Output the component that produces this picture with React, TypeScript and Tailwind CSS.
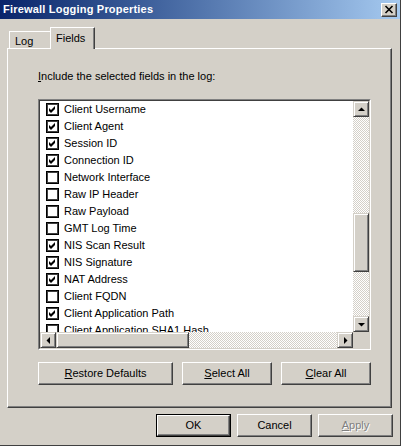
import type { ReactNode } from "react"

const fields: [string, boolean][] = [
  ["Client Username", true],
  ["Client Agent", true],
  ["Session ID", true],
  ["Connection ID", true],
  ["Network Interface", false],
  ["Raw IP Header", false],
  ["Raw Payload", false],
  ["GMT Log Time", false],
  ["NIS Scan Result", true],
  ["NIS Signature", true],
  ["NAT Address", true],
  ["Client FQDN", false],
  ["Client Application Path", true],
  ["Client Application SHA1 Hash", false],
]

const raised =
  "border border-t-white border-l-white border-r-[#404040] border-b-[#404040] shadow-[inset_-1px_-1px_0_#808080]"

function Button({ children, className, isDefault, disabled }: { children: ReactNode; className: string; isDefault?: boolean; disabled?: boolean }) {
  const inner = (
    <div className={`h-full w-full flex items-center justify-center bg-[#d4d0c8] ${raised} ${disabled ? "text-[#808080] [text-shadow:1px_1px_0_#fff]" : "text-black"}`}>
      {children}
    </div>
  )
  if (isDefault) {
    return <div className={`h-[23px] border border-black ${className}`}>{inner}</div>
  }
  return <div className={`h-[23px] ${className}`}>{inner}</div>
}

function ScrollBtn({ dir }: { dir: "up" | "down" | "left" | "right" }) {
  const points = {
    up: "4,9 11,9 7.5,5.5",
    down: "4,6 11,6 7.5,9.5",
    left: "9,4 9,11 5.5,7.5",
    right: "6,4 6,11 9.5,7.5",
  }[dir]
  return (
    <div className={`w-[16px] h-[16px] shrink-0 bg-[#d4d0c8] border border-t-[#d4d0c8] border-l-[#d4d0c8] border-r-[#404040] border-b-[#404040] shadow-[inset_1px_1px_0_#fff,inset_-1px_-1px_0_#808080] flex items-center justify-center`}>
      <svg width="14" height="14" viewBox="0 0 14 14" className="-ml-px -mt-px">
        <polygon points={points} fill="#000" />
      </svg>
    </div>
  )
}

function Thumb({ className }: { className: string }) {
  return (
    <div className={`bg-[#d4d0c8] border border-t-[#d4d0c8] border-l-[#d4d0c8] border-r-[#404040] border-b-[#404040] shadow-[inset_1px_1px_0_#fff,inset_-1px_-1px_0_#808080] ${className}`} />
  )
}

const track = "bg-[image:repeating-conic-gradient(#ffffff_0%_25%,#d4d0c8_0%_50%)] bg-[length:2px_2px]"

function CheckBox({ checked }: { checked: boolean }) {
  return (
    <svg width="13" height="13" viewBox="0 0 13 13" className="shrink-0" shapeRendering="crispEdges">
      <rect x="0.5" y="0.5" width="12" height="12" fill="#fff" stroke="#000" />
      <rect x="1.5" y="1.5" width="10" height="10" fill="none" stroke="#404040" />
      {checked && <polygon points="3,5 5,7 9,3 9,6 5,10 3,8" fill="#000" shapeRendering="geometricPrecision" />}
    </svg>
  )
}

export default function App() {
  return (
    <div className="w-[401px] h-[446px] bg-[#d4d0c8] border-r border-b border-[#404040] flex flex-col text-[11px] leading-[13px] text-black [font-family:'Liberation_Sans',Arial,sans-serif]">
      {/* title bar */}
      <div className="h-[19px] shrink-0 flex items-center justify-between pl-[3px] pr-[3px] bg-gradient-to-r from-[#0a246a] to-[#a6caf0]">
        <span className="text-white font-bold tracking-[0.2px]">Firewall Logging Properties</span>
        <div className={`w-[16px] h-[14px] bg-[#d4d0c8] flex items-center justify-center border border-t-white border-l-white border-r-[#404040] border-b-[#404040] shadow-[inset_-1px_-1px_0_#808080]`}>
          <svg width="10" height="9" viewBox="0 0 10 9" className="-ml-px">
            <path d="M1.5 1 L8.5 8 M8.5 1 L1.5 8" stroke="#000" strokeWidth="1.6" />
          </svg>
        </div>
      </div>

      <div className="pl-[7px] pt-[8px]">
        {/* tabs */}
        <div className="flex items-end h-[21px] pl-[2px]">
          <div className="w-[41px] h-[17px] border-l border-t border-white flex items-center pl-[5px] pt-[2px]">Log</div>
          <div className="relative z-10 w-[45px] h-[22px] -mb-px bg-[#d4d0c8] border-l border-t border-white border-r border-r-[#404040] shadow-[inset_-1px_0_0_#808080] flex items-start pl-[5px] pt-[4px]">
            Fields
          </div>
        </div>

        {/* panel */}
        <div className="w-[385px] h-[360px] border border-t-white border-l-white border-r-[#404040] border-b-[#404040] shadow-[inset_-1px_-1px_0_#808080] pl-[30px] pt-[21px]">
          <div>
            <span className="underline">I</span>nclude the selected fields in the log:
          </div>

          <div className="mt-[16px] w-[333px] h-[251px] border border-t-[#808080] border-l-[#808080] border-r-white border-b-white">
            <div className="h-full flex flex-col bg-white border border-t-[#404040] border-l-[#404040] border-r-[#d4d0c8] border-b-[#d4d0c8]">
              <div className="flex flex-1 min-h-0">
                <div className="flex-1 overflow-hidden">
                  {fields.map(([label, checked]) => (
                    <div key={label} className="h-[17px] flex items-center pl-[6px] gap-[5px] whitespace-nowrap">
                      <CheckBox checked={checked} />
                      <span>{label}</span>
                    </div>
                  ))}
                </div>
                <div className="w-[16px] flex flex-col">
                  <ScrollBtn dir="up" />
                  <div className={`flex-1 flex flex-col ${track}`}>
                    <div className="h-[96px]" />
                    <Thumb className="h-[59px]" />
                  </div>
                  <ScrollBtn dir="down" />
                </div>
              </div>
              <div className="h-[16px] flex shrink-0">
                <ScrollBtn dir="left" />
                <div className={`flex-1 flex ${track}`}>
                  <Thumb className="w-[133px]" />
                </div>
                <ScrollBtn dir="right" />
                <div className="w-[16px] bg-[#d4d0c8]" />
              </div>
            </div>
          </div>

          <div className="mt-[12px] flex gap-[9px]">
            <Button className="w-[135px]">
              <span><span className="underline">R</span>estore Defaults</span>
            </Button>
            <Button className="w-[90px]">
              <span><span className="underline">S</span>elect All</span>
            </Button>
            <Button className="w-[90px]">
              <span><span className="underline">C</span>lear All</span>
            </Button>
          </div>
        </div>
      </div>

      {/* footer */}
      <div className="flex justify-end gap-[6px] pt-[6px] pr-[7px]">
        <Button className="w-[75px]" isDefault>
          OK
        </Button>
        <Button className="w-[75px]">Cancel</Button>
        <Button className="w-[75px]" disabled>
          <span><span className="underline">A</span>pply</span>
        </Button>
      </div>
    </div>
  )
}
